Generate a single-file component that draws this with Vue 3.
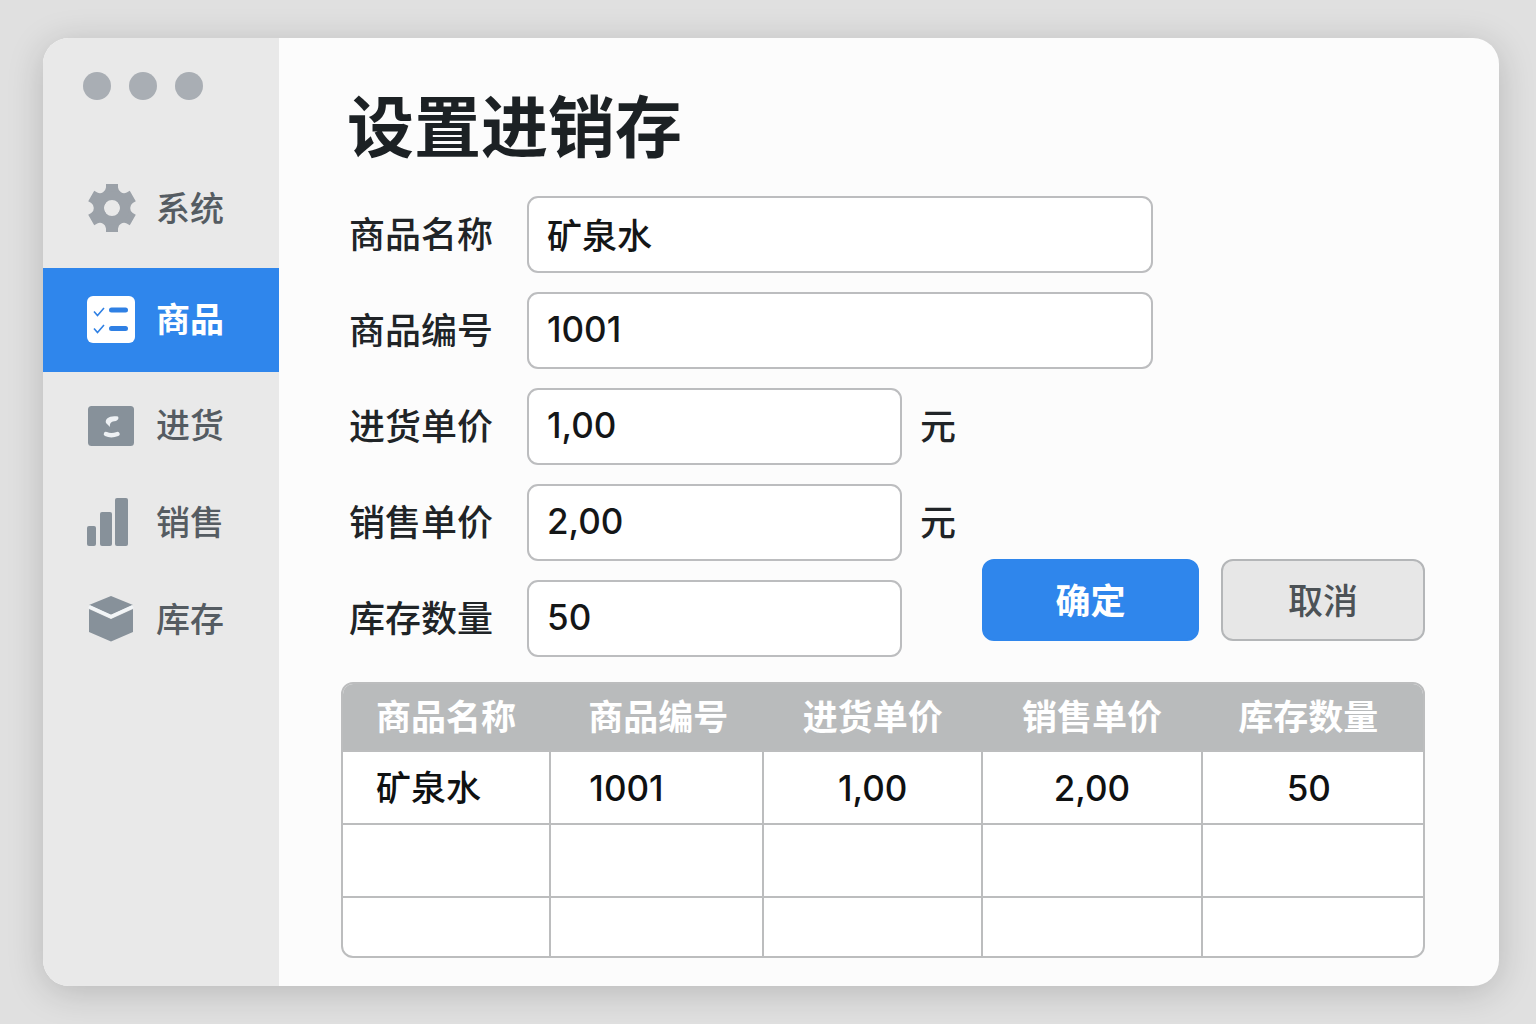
<script setup>
import { reactive, ref } from 'vue'

const navItems = [
  { id: 'system', label: '系统' },
  { id: 'goods', label: '商品' },
  { id: 'purchase', label: '进货' },
  { id: 'sales', label: '销售' },
  { id: 'stock', label: '库存' }
]
const active = ref('goods')

const fields = [
  { key: 'name', label: '商品名称', wide: true },
  { key: 'code', label: '商品编号', wide: true },
  { key: 'buy', label: '进货单价', unit: '元' },
  { key: 'sell', label: '销售单价', unit: '元' },
  { key: 'count', label: '库存数量' }
]
const form = reactive({ name: '矿泉水', code: '1001', buy: '1,00', sell: '2,00', count: '50' })

const rows = ref([
  { name: '矿泉水', code: '1001', buy: '1,00', sell: '2,00', count: '50' },
  {},
  {}
])
const teeth = [0, 60, 120, 180, 240, 300]
</script>

<template>
  <div class="window">
    <aside class="sidebar">
      <div class="dots"><span></span><span></span><span></span></div>
      <nav>
        <a
          v-for="item in navItems"
          :key="item.id"
          href="#"
          class="nav-item"
          :class="[item.id, { active: active === item.id }]"
          @click.prevent="active = item.id"
        >
          <svg class="icon" viewBox="0 0 52 52" aria-hidden="true">
            <g v-if="item.id === 'system'" transform="translate(26 25)" fill="#9ba1a8">
              <path
                v-for="angle in teeth"
                :key="angle"
                :transform="`rotate(${angle})`"
                d="M-6-24H6V-20.500Q6.400-17.100 9.200-15.600L4.600-8H-4.600L-9.200-15.600Q-6.400-17.100-6-20.500Z"
              />
              <circle r="12.500" fill="none" stroke="#9ba1a8" stroke-width="9" />
            </g>
            <g v-else-if="item.id === 'goods'">
              <rect x="1" y="2" width="48" height="47" rx="6" fill="#fff" />
              <g fill="none" stroke="#2f80e4">
                <path d="M8 17.500 11.500 21.500 18 14M8 34.500 11.500 38.500 18 31" stroke-width="1.600" />
                <path d="M25.500 16H39.500M25.500 34.500H39.500" stroke-width="5" stroke-linecap="round" />
              </g>
            </g>
            <g v-else-if="item.id === 'purchase'">
              <rect x="2" y="6" width="46" height="40" rx="3.500" fill="#87919a" />
              <path d="M32 16.500C24 15 18.500 18.500 20 23L24 27C23.500 23 25 21.500 30 21Q33.500 19 32 16.500Z" fill="#eef1f4" />
              <path d="M20 34Q25 36.500 31.500 34" fill="none" stroke="#eef1f4" stroke-width="4.500" stroke-linecap="round" />
            </g>
            <g v-else-if="item.id === 'sales'" fill="#87919a">
              <rect x="1" y="29" width="9" height="20" rx="2" />
              <rect x="14" y="15" width="12" height="34" rx="2" />
              <rect x="29" y="1" width="13" height="48" rx="2" />
            </g>
            <g v-else>
              <path d="M25 2 47 11 25 21 3 11Z" fill="#87919a" />
              <path d="M3 15 25 25 47 15V38L25 47.500 3 38Z" fill="#87919a" />
              <path d="M3 12.500 25 22.500 47 12.500" fill="none" stroke="#f2f5f7" stroke-width="3.500" />
            </g>
          </svg>
          <span>{{ item.label }}</span>
        </a>
      </nav>
    </aside>

    <main class="content">
      <h1>设置进销存</h1>

      <form class="form" @submit.prevent>
        <template v-for="field in fields" :key="field.key">
          <label :for="field.key">{{ field.label }}</label>
          <input :id="field.key" v-model="form[field.key]" type="text" :class="{ wide: field.wide }" />
          <span v-if="field.unit" class="unit">{{ field.unit }}</span>
        </template>
        <div class="actions">
          <button type="submit" class="confirm">确定</button>
          <button type="button" class="cancel">取消</button>
        </div>
      </form>

      <div class="table-frame">
        <table>
          <colgroup>
            <col class="c1" /><col class="c2" /><col class="c3" /><col class="c4" /><col />
          </colgroup>
          <thead>
            <tr>
              <th v-for="field in fields" :key="field.key" scope="col">{{ field.label }}</th>
            </tr>
          </thead>
          <tbody>
            <tr v-for="(row, i) in rows" :key="i">
              <td v-for="field in fields" :key="field.key">{{ row[field.key] }}</td>
            </tr>
          </tbody>
        </table>
      </div>
    </main>
  </div>
</template>

<style>
body {
  margin: 0;
  background: #e0e0e0;
}
</style>

<style scoped>
* {
  box-sizing: border-box;
}

.window {
  display: flex;
  min-height: calc(100vh - 76px);
  margin: 38px 37px 38px 43px;
  border-radius: 26px;
  overflow: hidden;
  background: #fcfcfc;
  box-shadow: 0 6px 36px rgba(0, 0, 0, 0.18);
  font-family: Inter, "Noto Sans CJK SC", sans-serif;
  font-weight: 500;
  color: #202427;
}

.sidebar {
  flex: 0 0 236px;
  background: #e9e9e9;
}

.dots {
  display: flex;
  gap: 18px;
  padding: 34px 0 0 40px;
}

.dots span {
  width: 28px;
  height: 28px;
  border-radius: 50%;
  background: #a9aeb4;
}

nav {
  padding-top: 59px;
}

.nav-item {
  display: flex;
  align-items: center;
  gap: 18px;
  height: 97px;
  padding-left: 43px;
  color: #555c62;
  font-size: 34px;
  line-height: 48px;
  text-decoration: none;
}

.nav-item.system {
  height: 100px;
  margin-bottom: 9px;
}

.nav-item.goods {
  height: 104px;
  margin-bottom: 5px;
}

.nav-item.active {
  background: #2f86ec;
  color: #fff;
  font-weight: 600;
}

.icon {
  flex: none;
  width: 52px;
  height: 52px;
}

.content {
  flex: 1;
  min-width: 0;
  padding: 42px 74px 28px 62px;
}

h1 {
  margin: 0 0 20px 6px;
  font-size: 67px;
  line-height: 96px;
  font-weight: 700;
  color: #1c2124;
}

.form {
  display: grid;
  grid-template-columns: 178px minmax(0, 375fr) 80px minmax(0, 171fr) minmax(0, 272fr);
  grid-auto-rows: 77px;
  row-gap: 19px;
  align-items: center;
  padding-left: 8px;
}

label,
.unit {
  font-size: 36px;
  line-height: 48px;
}

label {
  grid-column: 1;
}

.unit {
  grid-column: 3;
  padding-left: 18px;
}

input {
  grid-column: 2;
  width: 100%;
  height: 77px;
  padding: 0 18px 3px;
  border: 2px solid #bcbdbf;
  border-radius: 11px;
  background: #fff;
  color: #141617;
  font: inherit;
  font-size: 35px;
}

input.wide {
  grid-column: 2 / span 3;
}

.actions {
  grid-column: 4 / span 2;
  grid-row: 4 / span 2;
  align-self: end;
  justify-self: end;
  display: flex;
  gap: 22px;
  margin-bottom: 16px;
}

button {
  height: 82px;
  padding: 0 0 4px;
  border: 2px solid #b4b6b8;
  border-radius: 12px;
  font: inherit;
  font-size: 35px;
  cursor: pointer;
}

.confirm {
  width: 217px;
  border-color: #2f86ec;
  background: #2f86ec;
  color: #fff;
  font-weight: 600;
}

.cancel {
  width: 204px;
  background: #e7e7e7;
  color: #4c5256;
}

.table-frame {
  margin-top: 25px;
  border: 2px solid #bcbdbe;
  border-radius: 12px;
  overflow: hidden;
  background: #fff;
}

table {
  width: 100%;
  border-collapse: collapse;
  table-layout: fixed;
}

.c1 {
  width: 19.2%;
}

.c2 {
  width: 19.7%;
}

.c3,
.c4 {
  width: 20.3%;
}

th {
  height: 67px;
  padding: 0;
  background: #b9bbbc;
  color: #fff;
  font-size: 35px;
  line-height: 48px;
  font-weight: 600;
}

td {
  height: 73px;
  padding: 0;
  border: 2px solid #bcbdbe;
  color: #0f1112;
  font-size: 35px;
  line-height: 48px;
  text-align: center;
}

td:first-child,
th:first-child {
  padding-left: 33px;
  border-left: 0;
  text-align: left;
}

td:nth-child(2),
th:nth-child(2) {
  padding-left: 38px;
  text-align: left;
}

td:last-child,
th:last-child {
  padding-right: 8px;
  border-right: 0;
}

tbody tr:last-child td {
  height: 59px;
  border-bottom: 0;
}
</style>
